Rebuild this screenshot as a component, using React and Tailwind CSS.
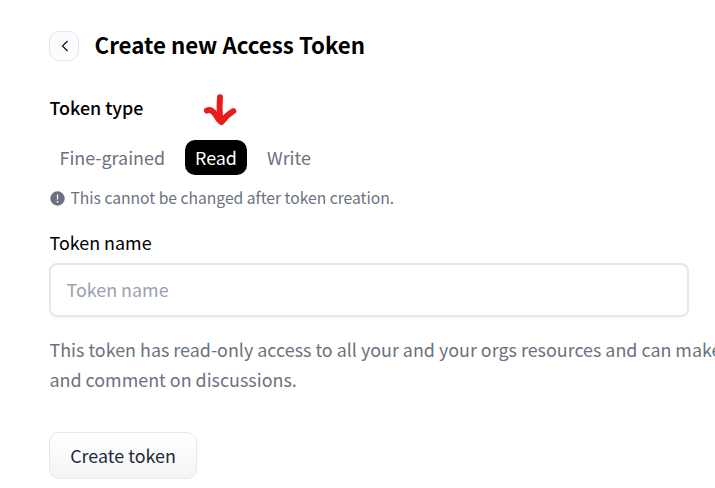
import { useState } from 'react';

const TOKEN_TYPES = ['Fine-grained', 'Read', 'Write'];

function TypeTab({ label, active, onClick }) {
  return (
    <button
      type="button"
      onClick={onClick}
      className={`h-[35px] rounded-[10px] px-[10px] leading-[35px] whitespace-nowrap ${
        active ? 'bg-black text-white' : 'text-[#6b7280]'
      }`}
    >
      {label}
    </button>
  );
}

function MarkerArrow() {
  return (
    <svg
      className="absolute left-[203px] top-[93px] h-[34px] w-[35px]"
      viewBox="0 0 35 34"
      fill="none"
      stroke="#e81c1c"
      strokeLinecap="round"
      strokeLinejoin="round"
    >
      <path d="M17 4.2C16.4 12 16.2 19 17.6 27.5" strokeWidth="6" />
      <path d="M3.8 17.7C7.5 15.8 10.2 18.4 12.4 21.6C14.3 24.6 16.2 27 18.4 29C21.5 24.6 25.5 21 30.4 18" strokeWidth="5.8" />
      <path d="M15.5 26.5L18.5 29.2L21.5 26" strokeWidth="5.4" />
    </svg>
  );
}

export default function App() {
  const [type, setType] = useState('Read');

  return (
    <div className="relative h-[488px] w-[715px] overflow-hidden bg-white pl-[49px] pt-[31px] font-['Noto_Sans_CJK_SC','Noto_Sans',sans-serif] text-[17.9px] text-black">
      <div className="flex h-[30px] items-center">
        <button
          type="button"
          className="flex size-[30px] items-center justify-center rounded-[10px] border border-gray-200 bg-gray-50/60"
        >
          <svg className="ml-px h-[12px] w-[8px]" viewBox="0 0 8 12" fill="none" stroke="#111827" strokeWidth="1.3">
            <path d="M6.5 1L1.5 6L6.5 11" />
          </svg>
        </button>
        <h1 className="-mt-[4px] ml-[15.5px] text-[22.3px] leading-[30px] font-bold whitespace-nowrap">
          Create new Access Token
        </h1>
      </div>

      <h2 className="mt-[31px] h-[30px] pl-[0.5px] leading-[30px] font-medium">Token type</h2>

      <div className="mt-[18px] flex gap-[10px] pl-[0.5px]">
        {TOKEN_TYPES.map((t) => (
          <TypeTab key={t} label={t} active={t === type} onClick={() => setType(t)} />
        ))}
      </div>

      <div className="mt-[11px] flex h-6 items-center text-[15.65px] leading-6 text-[#6b7280]">
        <svg className="ml-px size-[15px]" viewBox="0 0 15 15">
          <circle cx="7.5" cy="7.5" r="7.2" fill="#6b7280" />
          <path d="M7.5 3.5v5" stroke="#fff" strokeWidth="1.3" />
          <circle cx="7.5" cy="10.8" r="0.9" fill="#fff" />
        </svg>
        <span className="ml-[5.4px] whitespace-nowrap">This cannot be changed after token creation.</span>
      </div>

      <label className="mt-[17px] block h-[30px] pl-[0.5px] leading-[30px]" htmlFor="token-name">
        Token name
      </label>
      <input
        id="token-name"
        type="text"
        placeholder="Token name"
        className="mt-[6px] block h-[54px] w-[640px] rounded-lg border-2 border-gray-200 px-[15.5px] pb-[2px] placeholder:text-gray-400 shadow-xs"
      />

      <p className="mt-[17px] pl-[0.5px] leading-[30px] whitespace-nowrap text-[#6b7280]">
        This token has read-only access to all your and your orgs resources and can make
        <br />
        and comment on discussions.
      </p>

      <button
        type="button"
        className="mt-[38px] block h-[47px] w-[148px] rounded-[10px] border border-gray-200 bg-linear-to-b from-white to-gray-100 leading-[45px] whitespace-nowrap text-gray-800"
      >
        Create token
      </button>

      <MarkerArrow />
    </div>
  );
}
